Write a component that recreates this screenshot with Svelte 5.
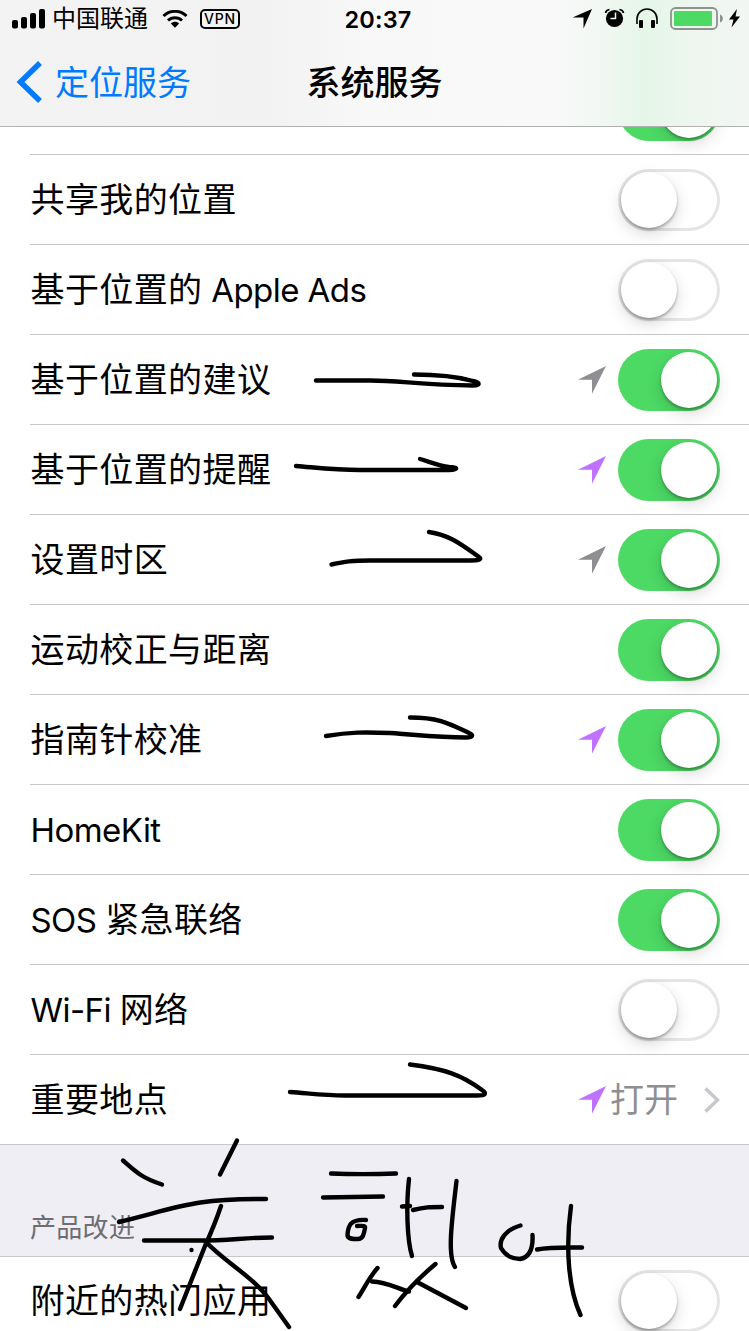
<script>
    const rows = [
        { label: '', on: true },
        { label: '共享我的位置', on: false },
        { label: '基于位置的 Apple Ads', on: false },
        { label: '基于位置的建议', on: true, arrow: 'gray' },
        { label: '基于位置的提醒', on: true, arrow: 'purple' },
        { label: '设置时区', on: true, arrow: 'gray' },
        { label: '运动校正与距离', on: true },
        { label: '指南针校准', on: true, arrow: 'purple' },
        { label: 'HomeKit', on: true },
        { label: 'SOS 紧急联络', on: true },
        { label: 'Wi-Fi 网络', on: false },
        { label: '重要地点', arrow: 'purple', value: '打开' }
    ];

    // pen strokes drawn over the page
    const strokes = [
        'M316 380.500H370C400 380.500 420 385 473 385.500C480 385.500 481 383 473 381C455 376 435 374.500 414 374.500',
        'M296 466C320 468 335 470 360 470H449C458 470 459 467.500 449 467C440 466 430 462 420 459',
        'M331.500 564.500C345 561.500 352 560.500 370 560.500H470C480 560.500 482 559 479 557C462 545 450 535 429 532',
        'M326 736C350 732 365 732 390 733C425 735.500 440 737.200 466 737.500C473 737.500 474 735 469 733C450 724 440 717.500 410 717.500',
        'M290 1092C315 1094 325 1095.500 345 1095.500H477C486 1095.500 487 1093.500 482 1090C462 1075 445 1069 410 1064.500',
        'M123 1160.500C136 1172 142 1178 162 1184.500',
        'M237 1140.500L220 1174.500',
        'M119 1222C180 1207 193 1198.500 266 1199',
        'M144 1240.500H200C230 1240.500 245 1237.500 272 1237.500',
        'M221 1206C216 1221 210 1235 205 1246L180 1309',
        'M206 1242C225 1262 252 1276 269 1299L289 1327',
        'M331 1173.500C350 1174.300 375 1174.300 396 1173.500',
        'M323 1197.500L383 1196.500',
        'M366 1220C350 1219 348 1226 347.500 1235C347.500 1239 352 1239 358 1239C363 1239 364 1234 365 1228C365.500 1225 362 1226 357 1226',
        'M409 1179C406 1205 407 1240 412 1256',
        'M402 1206.500L410 1206',
        'M413 1210C425 1207 430 1207 442 1207',
        'M456.500 1181C452 1220 447 1255 455 1267',
        'M377.500 1268C368 1279 365 1287 358.500 1297',
        'M372 1281.500C388 1282 398 1289 409 1291.500',
        'M435.500 1264C420 1277 407 1290 395 1306',
        'M417 1282L466 1308',
        'M520.500 1225.500C505 1230 499 1240 501 1248C505 1255 512 1259 520 1259C532 1257 533 1245 532.500 1235',
        'M537 1249.500C550 1247 565 1247.500 582 1247.500',
        'M571 1206C565 1250 569 1290 580.500 1315'
    ];

    // Latin runs are set a little tighter than the Chinese ones
    function split(label) {
        return label.split(/([ A-Za-z-]+)/).filter(Boolean);
    }
</script>

{#snippet toggle(on)}
    <div class="toggle" class:toggle--on={on}><span class="toggle__knob"></span></div>
{/snippet}

<div class="screen">
    <header class="header">
        <div class="status">
            <div class="status__left">
                <svg width="34" height="20" viewBox="0 0 34 20">
                    <rect x="0" y="11" width="6" height="8.500" rx="2" />
                    <rect x="9" y="8" width="6" height="11.500" rx="2" />
                    <rect x="18" y="4" width="6" height="15.500" rx="2" />
                    <rect x="27" y="0" width="6" height="19.500" rx="2" />
                </svg>
                <span class="status__carrier">中国联通</span>
                <svg class="status__wifi" width="26" height="18" viewBox="0 0 26 18">
                    <path d="M1.500 6C8 -0.200 18 -0.200 24.500 6M6 10.500C10 6.800 16 6.800 20 10.500" fill="none" stroke="#000" stroke-width="3" />
                    <path d="M8.800 13.500C11.200 11.200 14.800 11.200 17.200 13.500L13 17.700Z" />
                </svg>
                <span class="status__vpn">VPN</span>
            </div>
            <span class="status__time">20:37</span>
            <div class="status__right">
                <svg width="177" height="28" viewBox="572 5 177 28">
                    <path d="M572.500 17.500L592 9L583.500 28.500V17.500Z" />
                    <circle cx="614.500" cy="18.500" r="8.600" />
                    <path d="M605.500 13Q606 10 609.500 9.500M623.500 13Q623 10 619.500 9.500" fill="none" stroke="#000" stroke-width="1.700" />
                    <path d="M615.500 12.500V18.500H610.500" fill="none" stroke="#f0f6f1" stroke-width="1.500" />
                    <path d="M637 24V19A10 10 0 0 1 657 19V24" fill="none" stroke="#000" stroke-width="1.600" />
                    <rect x="639" y="20" width="4" height="8" rx="1" />
                    <rect x="651" y="20" width="4" height="8" rx="1" />
                    <rect x="671" y="8" width="46" height="21" rx="4.500" fill="none" stroke="#8c938d" stroke-width="1.800" />
                    <rect x="674" y="11" width="38" height="15" rx="1" fill="#4cd964" />
                    <path d="M720 14.500Q722.800 15.500 722.800 18.500T720 22.500Z" fill="#8c938d" />
                    <path d="M737 9L729 19.500H733.500L731.500 27.500L740 16.500H735.500Z" />
                </svg>
            </div>
        </div>
        <nav class="nav">
            <div class="nav__back">
                <svg width="26" height="42" viewBox="0 0 26 42"><path d="M24 2L4.500 21L24 40" fill="none" stroke="#007aff" stroke-width="5.500" /></svg>
                <span class="nav__label">定位服务</span>
            </div>
            <h1 class="nav__title">系统服务</h1>
        </nav>
    </header>

    <main class="content">
        <div class="list">
            {#each rows as row}
                <div class="row">
                    <span class="row__label">{#each split(row.label) as part}<span class:latin={/[A-Za-z]/.test(part)}>{part}</span>{/each}</span>
                    {#if row.arrow}
                        <svg class="row__arrow row__arrow--{row.arrow}" width="28" height="28" viewBox="0 0 28 28"><path d="M0 13.700L28 0L14 27.700V13.700Z" /></svg>
                    {/if}
                    {#if row.value}
                        <span class="row__value">{row.value}</span>
                        <svg class="row__chevron" width="16" height="26" viewBox="0 0 16 26"><path d="M1.500 1.500L13.500 13L1.500 24.500" fill="none" stroke="#c7c7cc" stroke-width="3.500" /></svg>
                    {:else}
                        {@render toggle(row.on)}
                    {/if}
                </div>
            {/each}
        </div>
        <h2 class="section">产品改进</h2>
        <div class="row row--last">
            <span class="row__label">附近的热门应用</span>
            {@render toggle(false)}
        </div>
    </main>

    <svg class="ink" width="749" height="1331" viewBox="0 0 749 1331">
        {#each strokes as d}
            <path {d} />
        {/each}
        <circle cx="191.500" cy="1250" r="2.200" />
    </svg>
</div>

<style>
    :global(body) {
        background: #fff;
    }

    .screen {
        position: relative;
        display: flex;
        flex-direction: column;
        width: 749px;
        height: 1331px;
        overflow: hidden;
        color: #000;
        font-family: Inter, "Noto Sans CJK SC", sans-serif;
    }

    .header {
        flex: none;
        box-sizing: border-box;
        height: 127px;
        border-bottom: 1px solid #b0b0b2;
        background: linear-gradient(90deg, #f3f3f3 0, #f2f2f2 270px, #f8f8f8 370px, #f9f9f9 550px, #f4f8f5 590px, #e5f6e8 645px, #ecf6ee 685px, #f3f6f4 749px);
    }

    .status {
        display: grid;
        grid-template-columns: 1fr auto 1fr;
        align-items: center;
        height: 38px;
    }

    .status__left {
        display: flex;
        align-items: center;
        padding-left: 12px;
    }

    .status__carrier {
        margin-left: 6px;
        font-size: 24px;
        line-height: 36px;
    }

    .status__wifi {
        margin-left: 14px;
    }

    .status__vpn {
        box-sizing: border-box;
        width: 40px;
        height: 20px;
        margin-left: 12px;
        border: 2px solid #000;
        border-radius: 5px;
        font-size: 14px;
        font-weight: 500;
        line-height: 16px;
        letter-spacing: 0.8px;
        text-align: center;
    }

    .status__time {
        margin-left: 7px;
        font-size: 23.5px;
        font-weight: 600;
        letter-spacing: 0.2px;
    }

    .status__right {
        display: flex;
        justify-content: flex-end;
    }

    .nav {
        display: grid;
        grid-template-columns: 1fr auto 1fr;
        align-items: center;
        height: 88px;
    }

    .nav__back {
        display: flex;
        align-items: center;
        gap: 13px;
        padding-left: 16px;
        color: #007aff;
        font-size: 34px;
    }

    .nav__label {
        padding-bottom: 4px;
    }

    .nav__title {
        margin: 0;
        padding-bottom: 4px;
        font-size: 34px;
        font-weight: 500;
    }

    .content {
        flex: 1;
        min-height: 0;
        overflow: hidden;
    }

    /* scrolled partway under the header */
    .list {
        margin-top: -62px;
        border-bottom: 1px solid #c8c7cc;
    }

    .row {
        display: flex;
        align-items: center;
        box-sizing: border-box;
        height: 90px;
        margin-left: 30px;
        padding: 1px 29px 0 0;
        border-bottom: 1px solid #c8c7cc;
    }

    .list .row:last-child {
        height: 89px;
        border-bottom: none;
    }

    .row--last {
        height: 89px;
        padding-top: 0;
    }

    .row__label {
        flex: 1;
        padding-left: 0.5px;
        font-size: 34px;
        line-height: 50px;
        letter-spacing: 0.4px;
        white-space: nowrap;
    }

    .latin {
        font-size: 33px;
        letter-spacing: -0.55px;
    }

    .row__arrow {
        margin-right: 12px;
    }

    .row__arrow--gray {
        fill: #8e8e93;
    }

    .row__arrow--purple {
        fill: #bf72ff;
    }

    .row__value {
        margin-left: -8px;
        color: #8e8e93;
        font-size: 34px;
        line-height: 50px;
    }

    .row__chevron {
        margin-left: 26px;
    }

    .toggle {
        box-sizing: border-box;
        width: 102px;
        height: 62px;
        padding: 3px;
        border-radius: 31px;
        box-shadow: inset 0 0 0 3px #e5e5e5;
    }

    .toggle__knob {
        display: block;
        width: 56px;
        height: 56px;
        border-radius: 50%;
        background: #fff;
        box-shadow: 0 2px 3px rgba(0, 0, 0, 0.3), 0 6px 16px rgba(0, 0, 0, 0.15);
    }

    .toggle--on {
        background: #4cd964;
        box-shadow: none;
    }

    .toggle--on .toggle__knob {
        margin-left: 40px;
    }

    .section {
        box-sizing: border-box;
        height: 112px;
        margin: 0;
        padding: 64px 30px 0;
        border-bottom: 1px solid #c8c7cc;
        background: #efeef4;
        color: #6d6d72;
        font-size: 26px;
        font-weight: 400;
        line-height: 38px;
        letter-spacing: 0.3px;
    }

    .ink {
        position: absolute;
        top: 0;
        left: 0;
    }

    .ink path {
        fill: none;
        stroke: #000;
        stroke-width: 4.4;
        stroke-linecap: round;
        stroke-linejoin: round;
    }
</style>
